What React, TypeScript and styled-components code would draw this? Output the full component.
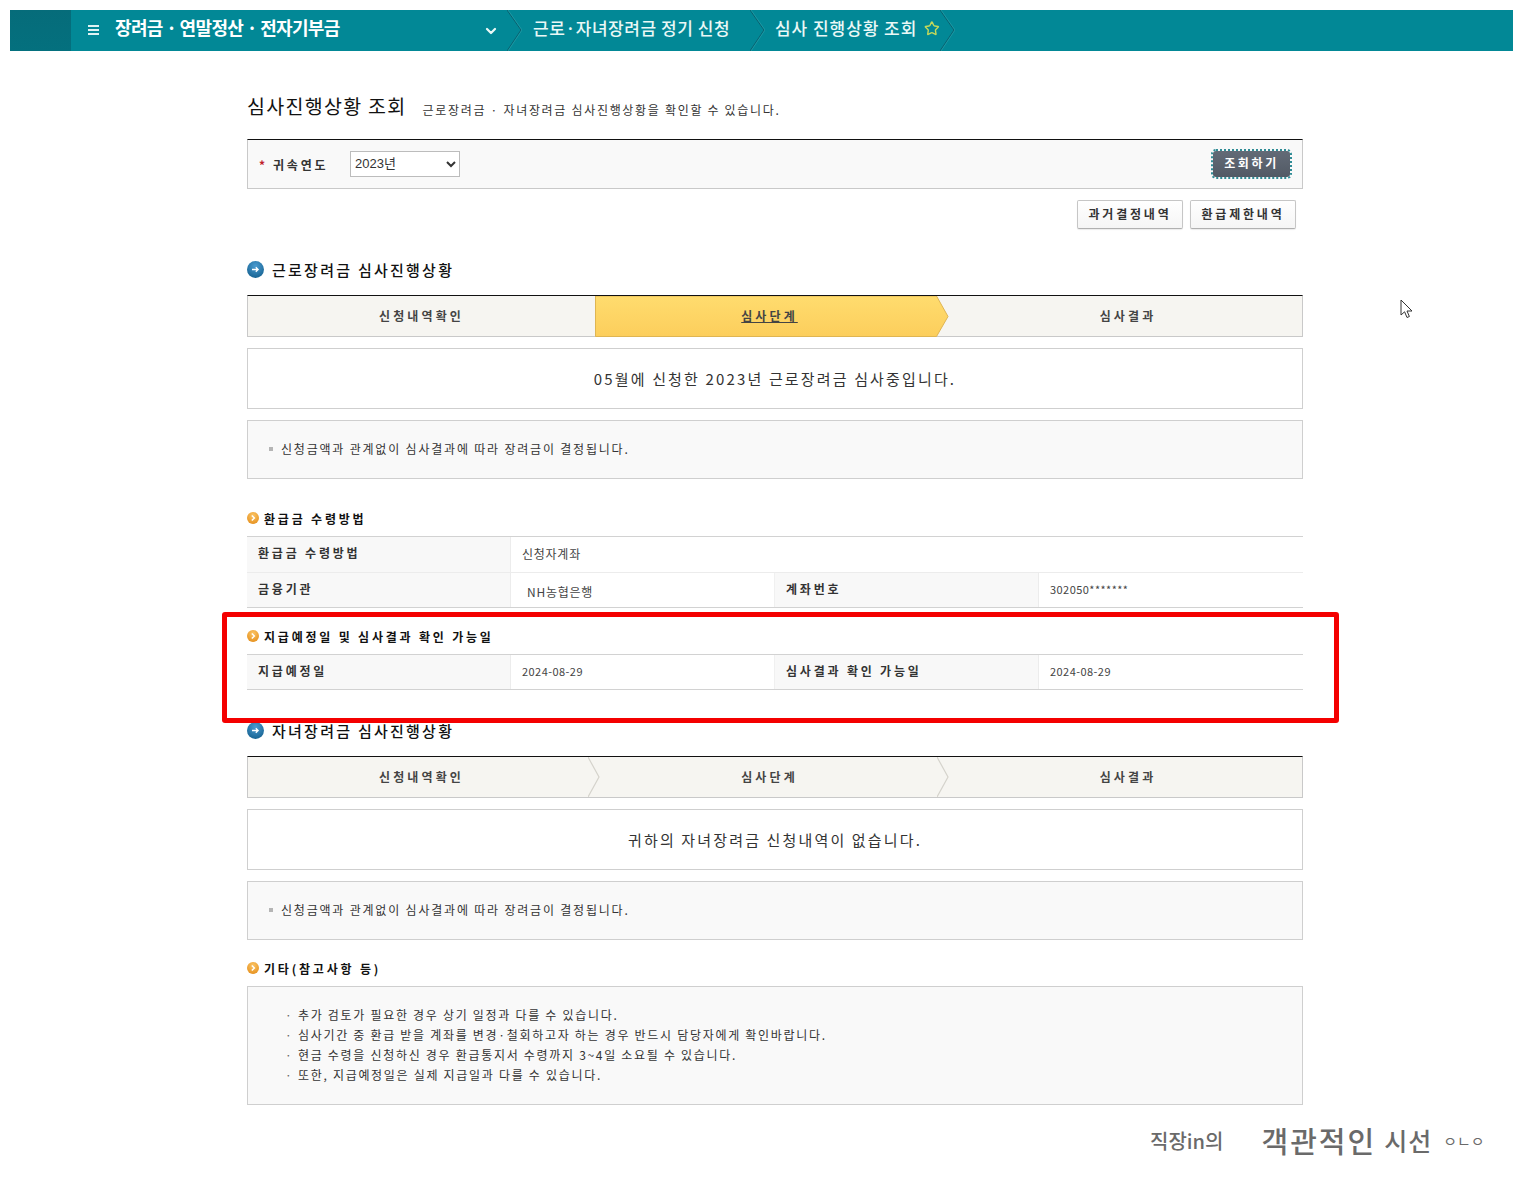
import React from "react";
import styled, { createGlobalStyle } from "styled-components";
import { Star, ChevronDown } from "lucide-react";

const Global = createGlobalStyle`
  html, body { margin: 0; padding: 0; background: #fff; }
  body { font-family: "Noto Sans CJK KR", "Liberation Sans", sans-serif; color: #333; }
  * { box-sizing: border-box; }
`;

const Page = styled.div`
  position: relative;
  height: 1201px;
  overflow: hidden;
  padding-top: 10px;
`;

const TopBar = styled.header`
  display: flex;
  align-items: stretch;
  height: 41px;
  margin: 0 10px;
  background: #028896;
  color: #fff;
`;
const TopStrip = styled.div`
  width: 61px;
  background: linear-gradient(180deg, #066c7a, #04707e);
`;
const MenuGroup = styled.div`
  display: flex;
  align-items: center;
  width: 436px;
  padding-left: 17px;
`;
const Burger = styled.span`
  display: block;
  width: 11px;
  height: 10px;
  margin-right: 16px;
  margin-bottom: 2px;
  border-top: 2px solid #dff3f3;
  border-bottom: 2px solid #dff3f3;
  position: relative;
  &::after {
    content: "";
    position: absolute;
    left: 0;
    right: 0;
    top: 2px;
    height: 2px;
    background: #dff3f3;
  }
`;
const MenuTitle = styled.span`
  flex: 1;
  padding-bottom: 7px;
  font-size: 18px;
  font-weight: 700;
  letter-spacing: -0.65px;
  white-space: nowrap;
`;
const Crumb = styled.div<{ $w: number; $pad: number; $ls: number }>`
  display: flex;
  align-items: center;
  width: ${(p) => p.$w}px;
  padding-left: ${(p) => p.$pad}px;
  font-size: 17px;
  font-weight: 500;
  letter-spacing: ${(p) => p.$ls}px;
  white-space: nowrap;
  color: #eaf8f6;
`;
const CrumbText = styled.span`
  padding-bottom: 6px;
`;
const CrumbSep = styled.svg`
  flex: none;
  width: 15px;
  height: 41px;
`;

const Main = styled.main`
  width: 1056px;
  margin: 0 0 0 247px;
`;
const TitleRow = styled.div`
  display: flex;
  align-items: center;
  height: 30px;
  margin-top: 39px;
`;
const PageTitle = styled.h1`
  margin: 0;
  font-size: 19.5px;
  font-weight: 400;
  letter-spacing: 1.3px;
  color: #111;
  white-space: nowrap;
`;
const PageSub = styled.p`
  margin: 9px 0 0 16px;
  font-size: 12px;
  letter-spacing: 1.69px;
  color: #333;
  white-space: nowrap;
`;

const SearchBox = styled.form`
  display: flex;
  align-items: center;
  height: 50px;
  margin-top: 19px;
  padding: 0 11px 0 11px;
  border: 1px solid #c9c9c9;
  border-top: 1px solid #111;
  background: #f9f9f9;
`;
const Req = styled.span`
  color: #c0202a;
  font-size: 12px;
  font-weight: 700;
  width: 14px;
`;
const FieldLabel = styled.label`
  width: 77px;
  font-size: 12px;
  font-weight: 700;
  letter-spacing: 2.8px;
  color: #333;
`;
const YearSelect = styled.select`
  width: 110px;
  height: 26px;
  margin-bottom: 1px;
  border: 1px solid #bcbcbc;
  background: #fff;
  font-family: "Liberation Sans", "Noto Sans CJK KR", sans-serif;
  font-size: 13px;
  color: #333;
  padding-left: 0;
`;
const QueryBtn = styled.button`
  margin-left: auto;
  width: 77px;
  height: 26px;
  margin-right: 1px;
  margin-bottom: 1px;
  border: 0;
  border-radius: 3px;
  background: linear-gradient(180deg, #636b77, #525a65);
  color: #fff;
  font-family: inherit;
  font-size: 12px;
  font-weight: 700;
  letter-spacing: 2.6px;
  padding: 0 0 2px;
  outline: 2px dotted #2f8c96;
  outline-offset: 0;
`;
const LinkRow = styled.div`
  display: flex;
  justify-content: flex-end;
  gap: 7px;
  margin-top: 11px;
  padding-right: 7px;
`;
const GhostBtn = styled.button`
  width: 106px;
  height: 29px;
  border: 1px solid #c6c6c6;
  border-bottom-color: #b0b0b0;
  border-radius: 2px;
  background: linear-gradient(180deg, #ffffff, #f5f5f5);
  box-shadow: 0 1px 1px rgba(0, 0, 0, 0.08);
  color: #333;
  font-family: inherit;
  font-size: 12px;
  font-weight: 700;
  letter-spacing: 2.8px;
  padding: 0 0 2px;
`;

const SectionHead = styled.h2<{ $top: number }>`
  display: flex;
  align-items: center;
  gap: 8px;
  height: 20px;
  margin: ${(p) => p.$top}px 0 0;
  font-size: 15px;
  font-weight: 500;
  letter-spacing: 2.25px;
  color: #111;
  white-space: nowrap;
`;
const StepBar = styled.ol`
  display: grid;
  grid-template-columns: 347px 354px 1fr;
  height: 42px;
  margin: 16px 0 0;
  padding: 0;
  list-style: none;
  border: 1px solid #c9c9c9;
  border-top: 1px solid #111;
  background: #f6f5f1;
`;
const Step = styled.li<{ $active?: boolean; $pr?: number; $pl?: number }>`
  position: relative;
  display: flex;
  align-items: center;
  justify-content: center;
  padding: 0 ${(p) => p.$pr ?? 0}px 2px ${(p) => p.$pl ?? 0}px;
  font-size: 12px;
  font-weight: 700;
  letter-spacing: 3.1px;
  color: #444;
  text-decoration: ${(p) => (p.$active ? "underline" : "none")};
  & > span {
    position: relative;
    z-index: 2;
  }
`;
const StepEdge = styled.svg`
  position: absolute;
  top: 0;
  right: -5px;
  width: 12px;
  height: 40px;
`;
const StepEdgeLast = styled(StepEdge)`
  right: 0;
`;
const ActiveShape = styled.svg`
  position: absolute;
  top: 0;
  left: 0;
  width: 354px;
  height: 41px;
`;

const Message = styled.div`
  display: flex;
  align-items: center;
  justify-content: center;
  height: 61px;
  margin-top: 11px;
  border: 1px solid #cfcfcf;
  background: #fff;
  font-size: 15px;
  font-weight: 400;
  letter-spacing: 2.15px;
  color: #333;
`;
const Note = styled.div`
  display: flex;
  align-items: center;
  height: 59px;
  margin-top: 11px;
  padding: 0 0 2px 21px;
  border: 1px solid #cfcfcf;
  background: #f9f9f9;
  font-size: 12px;
  letter-spacing: 1.8px;
  color: #333;
`;
const Bullet = styled.i`
  width: 4px;
  height: 4px;
  margin-right: 8px;
  background: #b5b5b5;
`;
const SubHead = styled.h3<{ $top: number }>`
  display: flex;
  align-items: center;
  gap: 5px;
  height: 16px;
  margin: ${(p) => p.$top}px 0 0;
  padding-bottom: 2px;
  font-size: 12px;
  font-weight: 700;
  letter-spacing: 2.8px;
  color: #111;
  white-space: nowrap;
`;
const InfoTable = styled.div`
  display: grid;
  grid-template-columns: repeat(4, 264px);
  margin-top: 9px;
  border-top: 1px solid #d2d2d2;
  border-bottom: 1px solid #d2d2d2;
`;
const Th = styled.div<{ $line?: boolean; $h: number }>`
  display: flex;
  align-items: center;
  height: ${(p) => p.$h}px;
  padding: 0 11px 4px;
  background: #f8f8f8;
  font-size: 12px;
  font-weight: 700;
  letter-spacing: 2.8px;
  color: #333;
  border-bottom: ${(p) => (p.$line ? "1px solid #ececec" : "0")};
  border-right: 1px solid #ececec;
`;
const Td = styled.div<{ $line?: boolean; $span?: number; $h: number; $indent?: number; $drop?: number; $kr?: boolean }>`
  display: flex;
  align-items: center;
  grid-column: span ${(p) => p.$span ?? 1};
  height: ${(p) => p.$h}px;
  padding: ${(p) => p.$drop ?? 0}px 11px 2px ${(p) => p.$indent ?? 11}px;
  font-size: ${(p) => (p.$kr ? 12 : 11)}px;
  letter-spacing: ${(p) => (p.$kr ? 0.75 : 0.45)}px;
  color: #444;
  border-bottom: ${(p) => (p.$line ? "1px solid #ececec" : "0")};
  border-right: ${(p) => (p.$span ? "0" : "1px solid #f0f0f0")};
  &:last-child { border-right: 0; }
`;
const Notes = styled.ul`
  display: flex;
  flex-direction: column;
  justify-content: center;
  gap: 2px;
  height: 119px;
  margin: 9px 0 0;
  padding: 0 0 2px 37px;
  list-style: none;
  border: 1px solid #cfcfcf;
  background: #f9f9f9;
  font-size: 12px;
  letter-spacing: 1.7px;
  line-height: 18px;
  color: #333;
  & li {
    position: relative;
    padding-left: 13px;
    white-space: nowrap;
  }
  & li::before {
    content: "·";
    position: absolute;
    left: 0;
    color: #666;
  }
`;

const RedFrame = styled.div`
  position: absolute;
  left: 222px;
  top: 612px;
  width: 1117px;
  height: 111px;
  border: 5px solid #f40000;
  border-radius: 3px;
  pointer-events: none;
`;
const Cursor = styled.svg`
  position: absolute;
  left: 1400px;
  top: 299px;
  width: 13px;
  height: 20px;
`;
const Watermark = styled.div`
  position: absolute;
  left: 1150px;
  top: 1120px;
  height: 40px;
  display: flex;
  align-items: center;
  color: #6a6a6a;
  white-space: nowrap;
`;
const WmWord = styled.span<{ $size: number; $gap: number; $ls?: number; $weight?: number }>`
  margin-left: ${(p) => p.$gap}px;
  font-size: ${(p) => p.$size}px;
  font-weight: ${(p) => p.$weight ?? 500};
  letter-spacing: ${(p) => p.$ls ?? 0}px;
`;

const Sep = () => (
  <CrumbSep viewBox="0 0 15 41">
    <path d="M0 0 L14 20 L0 41" fill="none" stroke="#0b5f6d" strokeWidth="1" />
    <path d="M1 0 L15 20 L1 41" fill="none" stroke="#2aa0aa" strokeWidth="1" opacity=".7" />
  </CrumbSep>
);

const BlueDot = () => (
  <svg width="17" height="17" viewBox="0 0 17 17" style={{ flex: "none" }}>
    <defs>
      <radialGradient id="bd" cx="50%" cy="30%" r="75%">
        <stop offset="0" stopColor="#4b9bd0" />
        <stop offset="1" stopColor="#14608f" />
      </radialGradient>
    </defs>
    <circle cx="8.5" cy="8.5" r="8.5" fill="url(#bd)" />
    <path d="M5 8.5h6M8.8 6.3l2.3 2.2-2.3 2.2" fill="none" stroke="#fff" strokeWidth="1.3" />
  </svg>
);
const OrangeDot = () => (
  <svg width="12" height="12" viewBox="0 0 12 12" style={{ flex: "none" }}>
    <defs>
      <radialGradient id="od" cx="50%" cy="30%" r="75%">
        <stop offset="0" stopColor="#fbc566" />
        <stop offset="1" stopColor="#e58f1c" />
      </radialGradient>
    </defs>
    <circle cx="6" cy="6" r="6" fill="url(#od)" />
    <path d="M4.8 3.4L7.4 6 4.8 8.6" fill="none" stroke="#fff" strokeWidth="1.4" />
  </svg>
);

const Edge = ({ last }: { last?: boolean }) => {
  const C = last ? StepEdgeLast : StepEdge;
  return (
    <C viewBox="0 0 12 40">
      <path d="M0 0 L11 20 L0 40" fill="none" stroke="#d5d3cc" strokeWidth="1.2" />
    </C>
  );
};

const Steps = ({ active }: { active?: boolean }) => (
  <StepBar>
    <Step>
      <span>신청내역확인</span>
      {!active && <Edge />}
    </Step>
    <Step $active={active} $pr={5}>
      {active && (
        <ActiveShape viewBox="0 0 354 41">
          <defs>
            <linearGradient id="as" x1="0" y1="0" x2="0" y2="1">
              <stop offset="0" stopColor="#ffdc6e" />
              <stop offset="1" stopColor="#fcce5c" />
            </linearGradient>
          </defs>
          <path d="M.5 0H341.5L353 20.5 341.5 40.5H.5Z" fill="url(#as)" stroke="#dfb552" />
        </ActiveShape>
      )}
      <span>심사단계</span>
      {!active && <Edge last />}
    </Step>
    <Step $pl={5}>
      <span>심사결과</span>
    </Step>
  </StepBar>
);

export default function App() {
  return (
    <Page>
      <Global />
      <TopBar>
        <TopStrip />
        <MenuGroup>
          <Burger />
          <MenuTitle>장려금 · 연말정산 · 전자기부금</MenuTitle>
          <ChevronDown size={16} strokeWidth={3.4} color="#eaf8f6" style={{ marginRight: 8 }} />
        </MenuGroup>
        <Sep />
        <Crumb $w={228} $pad={11} $ls={0.55}><CrumbText>근로·자녀장려금 정기 신청</CrumbText></Crumb>
        <Sep />
        <Crumb $w={175} $pad={10} $ls={0.95}>
          <CrumbText>심사 진행상황 조회</CrumbText>
          <Star size={17} strokeWidth={2.2} color="#c4d85a" style={{ marginLeft: 7, marginBottom: 4 }} />
        </Crumb>
        <Sep />
      </TopBar>

      <Main>
        <TitleRow>
          <PageTitle>심사진행상황 조회</PageTitle>
          <PageSub>근로장려금 · 자녀장려금 심사진행상황을 확인할 수 있습니다.</PageSub>
        </TitleRow>

        <SearchBox>
          <Req>*</Req>
          <FieldLabel>귀속연도</FieldLabel>
          <YearSelect defaultValue="2023">
            <option value="2023">2023년</option>
          </YearSelect>
          <QueryBtn type="button">조회하기</QueryBtn>
        </SearchBox>

        <LinkRow>
          <GhostBtn type="button">과거결정내역</GhostBtn>
          <GhostBtn type="button">환급제한내역</GhostBtn>
        </LinkRow>

        <SectionHead $top={30}>
          <BlueDot />
          근로장려금 심사진행상황
        </SectionHead>
        <Steps active />
        <Message>05월에 신청한 2023년 근로장려금 심사중입니다.</Message>
        <Note>
          <Bullet />
          신청금액과 관계없이 심사결과에 따라 장려금이 결정됩니다.
        </Note>

        <SubHead $top={32}>
          <OrangeDot />
          환급금 수령방법
        </SubHead>
        <InfoTable>
          <Th $h={36} $line>환급금 수령방법</Th>
          <Td $h={36} $span={3} $line $kr>신청자계좌</Td>
          <Th $h={34}>금융기관</Th>
          <Td $h={34} $indent={16} $drop={5} $kr>NH농협은행</Td>
          <Th $h={34}>계좌번호</Th>
          <Td $h={34}>302050*******</Td>
        </InfoTable>

        <SubHead $top={21}>
          <OrangeDot />
          지급예정일 및 심사결과 확인 가능일
        </SubHead>
        <InfoTable>
          <Th $h={34}>지급예정일</Th>
          <Td $h={34}>2024-08-29</Td>
          <Th $h={34}>심사결과 확인 가능일</Th>
          <Td $h={34}>2024-08-29</Td>
        </InfoTable>

        <SectionHead $top={30}>
          <BlueDot />
          자녀장려금 심사진행상황
        </SectionHead>
        <Steps />
        <Message>귀하의 자녀장려금 신청내역이 없습니다.</Message>
        <Note>
          <Bullet />
          신청금액과 관계없이 심사결과에 따라 장려금이 결정됩니다.
        </Note>

        <SubHead $top={21}>
          <OrangeDot />
          기타(참고사항 등)
        </SubHead>
        <Notes>
          <li>추가 검토가 필요한 경우 상기 일정과 다를 수 있습니다.</li>
          <li>심사기간 중 환급 받을 계좌를 변경·철회하고자 하는 경우 반드시 담당자에게 확인바랍니다.</li>
          <li>현금 수령을 신청하신 경우 환급통지서 수령까지 3~4일 소요될 수 있습니다.</li>
          <li>또한, 지급예정일은 실제 지급일과 다를 수 있습니다.</li>
        </Notes>
      </Main>

      <RedFrame />
      <Cursor viewBox="0 0 13 20">
        <path d="M1 1V16L4.6 12.8 7 18.5 9.4 17.5 7 12H12Z" fill="#fff" stroke="#333" strokeWidth="1" />
      </Cursor>
      <Watermark>
        <WmWord $size={20} $gap={0}>직장in의</WmWord>
        <WmWord $size={29} $gap={38} $ls={2}>객관적인</WmWord>
        <WmWord $size={25} $gap={8} $ls={1}>시선</WmWord>
        <WmWord $size={15} $gap={11} $weight={400}>ㅇㄴㅇ</WmWord>
      </Watermark>
    </Page>
  );
}
